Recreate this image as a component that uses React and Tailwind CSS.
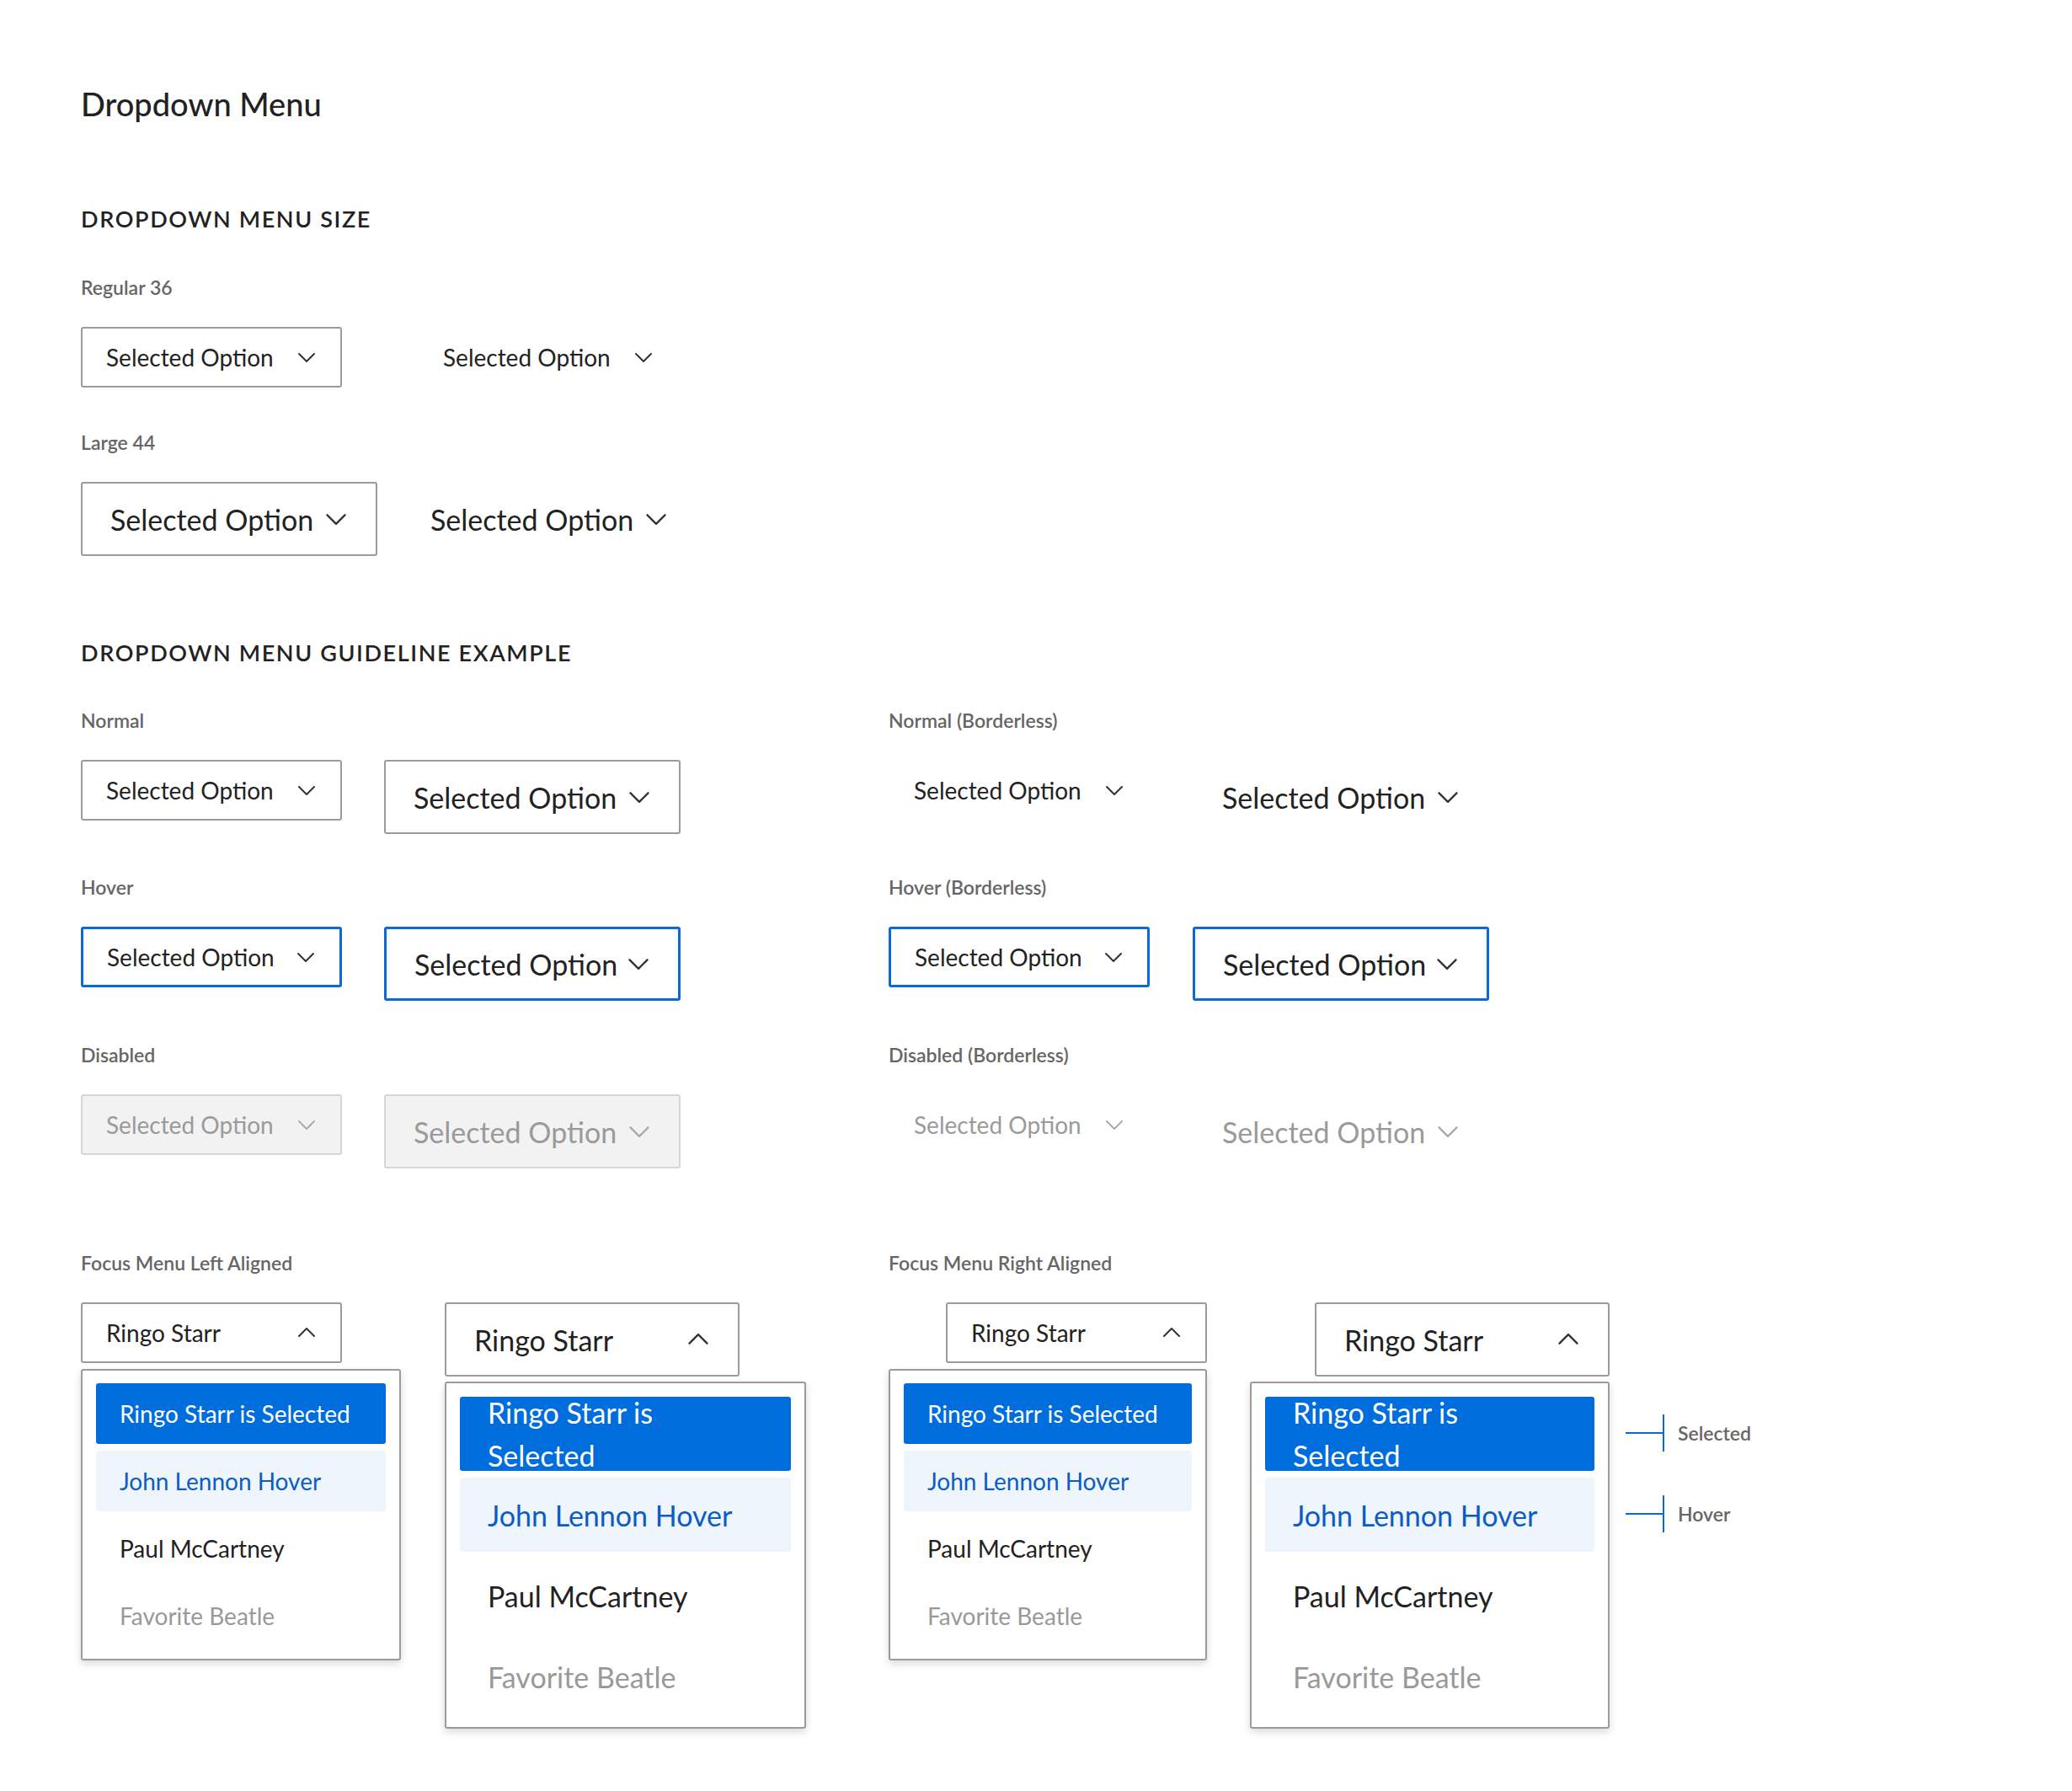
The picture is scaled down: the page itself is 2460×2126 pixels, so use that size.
import React from "react";

const F = { fontFamily: "Lato, 'Open Sans', sans-serif" };

function Chevron({ up, size = 24, color = "#333" }) {
  return (
    <svg width={size} height={size} viewBox="0 0 24 24" fill="none" stroke={color} strokeWidth="2" strokeLinecap="round" strokeLinejoin="round">
      {up ? <polyline points="3,16 12,7 21,16" /> : <polyline points="3,8 12,17 21,8" />}
    </svg>
  );
}

function DD({ lg, kind = "normal", text = "Selected Option", up, w }) {
  const dims = lg ? "h-[88px] px-[33px] text-[34px]" : "h-[72px] px-[28px] text-[28px]";
  const width = w || (lg ? "w-[352px]" : "w-[310px]");
  let style = "border-2 border-[#9b9b9b] bg-white text-[#222]";
  let chev = "#333";
  if (kind === "borderless") style = "border-2 border-transparent text-[#222]";
  if (kind === "hover") style = "border-[3px] border-[#0a6ad9] bg-white text-[#222]";
  if (kind === "disabled") { style = "border-2 border-[#d6d6d6] bg-[#f2f2f2] text-[#9a9a9a]"; chev = "#aaa"; }
  if (kind === "disabledb") { style = "border-2 border-transparent text-[#9a9a9a]"; chev = "#aaa"; }
  return (
    <div className={`${dims} ${width} ${style} rounded-[3px] flex items-center justify-between shrink-0`}>
      <span>{text}</span>
      <Chevron up={up} size={lg ? 28 : 24} color={chev} />
    </div>
  );
}

function Label({ children }) {
  return <div className="text-[23px] leading-[30px] font-semibold text-[#666]">{children}</div>;
}

function Menu({ lg, w }) {
  const item = lg ? "h-[88px] px-[33px] text-[34px]" : "h-[72px] px-[28px] text-[28px]";
  const pad = lg ? "p-[16px] gap-[8px]" : "px-[16px] py-[15px] gap-[8px]";
  return (
    <div className={`${w} ${pad} border-2 border-[#9b9b9b] rounded-[3px] bg-white flex flex-col shadow-[0_4px_10px_rgba(0,0,0,0.15)]`}>
      <div className={`${item} flex items-center bg-[#006ddd] text-white rounded-[3px]`}>Ringo Starr is Selected</div>
      <div className={`${item} flex items-center bg-[#eef5fd] text-[#0b5cc4] rounded-[3px]`}>John Lennon Hover</div>
      <div className={`${item} flex items-center text-[#222]`}>Paul McCartney</div>
      <div className={`${item} flex items-center text-[#999]`}>Favorite Beatle</div>
    </div>
  );
}

function Anno({ children }) {
  return (
    <div className="flex items-center h-[44px]">
      <div className="w-[44px] h-[2px] bg-[#0a6ad9]" />
      <div className="w-[2px] h-[44px] bg-[#0a6ad9]" />
      <div className="ml-[16px] text-[23px] font-semibold text-[#666]">{children}</div>
    </div>
  );
}

export default function App() {
  return (
    <div style={F} className="bg-white w-[2460px] min-h-[2126px] pl-[96px] pt-[100px] text-[#222]">
      <div className="text-[38px] leading-[46px] font-medium text-[#222]">Dropdown Menu</div>

      <div className="mt-[98px] text-[27px] leading-[32px] font-semibold tracking-[0.06em] text-[#222]">DROPDOWN MENU SIZE</div>
      <div className="mt-[50px]"><Label>Regular 36</Label></div>
      <div className="mt-[32px] flex gap-[90px]">
        <DD />
        <DD kind="borderless" />
      </div>
      <div className="mt-[50px]"><Label>Large 44</Label></div>
      <div className="mt-[32px] flex gap-[28px]">
        <DD lg />
        <DD lg kind="borderless" />
      </div>

      <div className="mt-[99px] text-[27px] leading-[32px] font-semibold tracking-[0.06em] text-[#222]">DROPDOWN MENU GUIDELINE EXAMPLE</div>

      {[
        ["Normal", "normal", "Normal (Borderless)", "borderless", 49],
        ["Hover", "hover", "Hover (Borderless)", "hover", 48],
        ["Disabled", "disabled", "Disabled (Borderless)", "disabledb", 49],
      ].map(([l, k, r, rk, mt]) => (
        <div key={l} className="flex" style={{ marginTop: mt }}>
          <div className="w-[959px]">
            <Label>{l}</Label>
            <div className="mt-[32px] flex gap-[50px] items-start">
              <DD kind={k} />
              <DD lg kind={k} />
            </div>
          </div>
          <div>
            <Label>{r}</Label>
            <div className="mt-[32px] flex gap-[51px] items-start">
              <DD kind={rk} />
              <DD lg kind={rk} />
            </div>
          </div>
        </div>
      ))}

      <div className="flex mt-[97px]">
        <div className="w-[959px]">
          <Label>Focus Menu Left Aligned</Label>
          <div className="mt-[32px] flex gap-[52px] items-start">
            <div className="flex flex-col gap-[7px] items-start">
              <DD text="Ringo Starr" up />
              <Menu w="w-[380px]" />
            </div>
            <div className="flex flex-col gap-[6px] items-start">
              <DD lg text="Ringo Starr" up w="w-[350px]" />
              <Menu lg w="w-[429px]" />
            </div>
          </div>
        </div>
        <div>
          <Label>Focus Menu Right Aligned</Label>
          <div className="mt-[32px] flex gap-[51px] items-start">
            <div className="flex flex-col gap-[7px] items-end">
              <DD text="Ringo Starr" up />
              <Menu w="w-[378px]" />
            </div>
            <div className="relative flex flex-col gap-[6px] items-end">
              <DD lg text="Ringo Starr" up w="w-[350px]" />
              <Menu lg w="w-[427px]" />
              <div className="absolute left-[446px] top-[133px]"><Anno>Selected</Anno></div>
              <div className="absolute left-[446px] top-[229px]"><Anno>Hover</Anno></div>
            </div>
          </div>
        </div>
      </div>
    </div>
  );
}
